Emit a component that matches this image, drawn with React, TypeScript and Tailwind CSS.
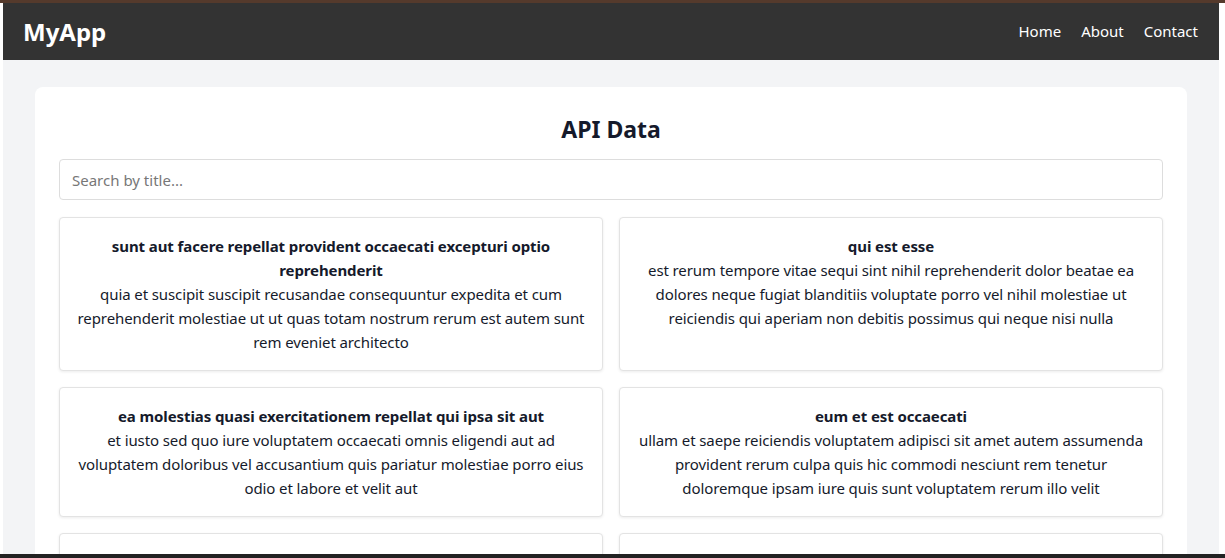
const posts = [
  {
    id: 1,
    title: "sunt aut facere repellat provident occaecati excepturi optio reprehenderit",
    body: "quia et suscipit suscipit recusandae consequuntur expedita et cum reprehenderit molestiae ut ut quas totam nostrum rerum est autem sunt rem eveniet architecto",
  },
  {
    id: 2,
    title: "qui est esse",
    body: "est rerum tempore vitae sequi sint nihil reprehenderit dolor beatae ea dolores neque fugiat blanditiis voluptate porro vel nihil molestiae ut reiciendis qui aperiam non debitis possimus qui neque nisi nulla",
  },
  {
    id: 3,
    title: "ea molestias quasi exercitationem repellat qui ipsa sit aut",
    body: "et iusto sed quo iure voluptatem occaecati omnis eligendi aut ad voluptatem doloribus vel accusantium quis pariatur molestiae porro eius odio et labore et velit aut",
  },
  {
    id: 4,
    title: "eum et est occaecati",
    body: "ullam et saepe reiciendis voluptatem adipisci sit amet autem assumenda provident rerum culpa quis hic commodi nesciunt rem tenetur doloremque ipsam iure quis sunt voluptatem rerum illo velit",
  },
  {
    id: 5,
    title: "nesciunt quas odio",
    body: "repudiandae veniam quaerat sunt sed alias aut fugiat sit autem sed est voluptatem omnis possimus esse voluptatibus quis est aut tenetur dolor neque",
  },
  {
    id: 6,
    title: "dolorem eum magni eos aperiam quia",
    body: "ut aspernatur corporis harum nihil quis provident sequi mollitia nobis aliquid molestiae perspiciatis et ea nemo ab reprehenderit accusantium quas voluptate dolores velit et doloremque molestiae",
  },
];

function Navbar() {
  return (
    <nav className="flex h-[57px] shrink-0 items-center justify-between bg-[#333333] pl-5 pr-[21px] text-white">
      <h1 className="text-[24px] font-bold">MyApp</h1>
      <ul className="flex gap-5 text-[15px]">
        <li>Home</li>
        <li>About</li>
        <li>Contact</li>
      </ul>
    </nav>
  );
}

export default function App() {
  return (
    <div
      className="flex h-screen flex-col overflow-hidden bg-white"
      style={{ fontFamily: '"Noto Sans", "Open Sans", sans-serif' }}
    >
      <div className="h-[3px] shrink-0 bg-[#553a2c]" />
      <div className="flex min-h-0 flex-1">
        <div className="w-[3px] shrink-0 bg-white" />
        <div className="flex min-h-0 flex-1 flex-col bg-[#f3f4f6]">
          <Navbar />
          <main className="min-h-0 flex-1 overflow-hidden px-8 pt-[27px]">
            <div className="rounded-lg bg-white p-6">
              <h2 className="mb-3 text-center text-[23px] font-bold leading-[36px] text-[#151a2b]">
                API Data
              </h2>
              <input
                type="text"
                placeholder="Search by title..."
                className="mb-[17px] h-[41px] w-full rounded border border-[#dddddd] px-3 text-[15px] outline-none placeholder:text-[#777]"
              />
              <div className="grid grid-cols-2 gap-4">
                {posts.map((p) => (
                  <div
                    key={p.id}
                    className="rounded border border-[#e3e3e3] bg-white p-4 text-center text-[15px] leading-6 tracking-[-0.1px] text-[#151a2b] shadow-[0_1px_3px_rgba(0,0,0,0.08)]"
                  >
                    <h3 className="font-bold">{p.title}</h3>
                    <p>{p.body}</p>
                  </div>
                ))}
              </div>
            </div>
          </main>
        </div>
        <div className="w-[6px] shrink-0 bg-white" />
      </div>
      <div className="h-[4px] shrink-0 bg-[#222222]" />
    </div>
  );
}
